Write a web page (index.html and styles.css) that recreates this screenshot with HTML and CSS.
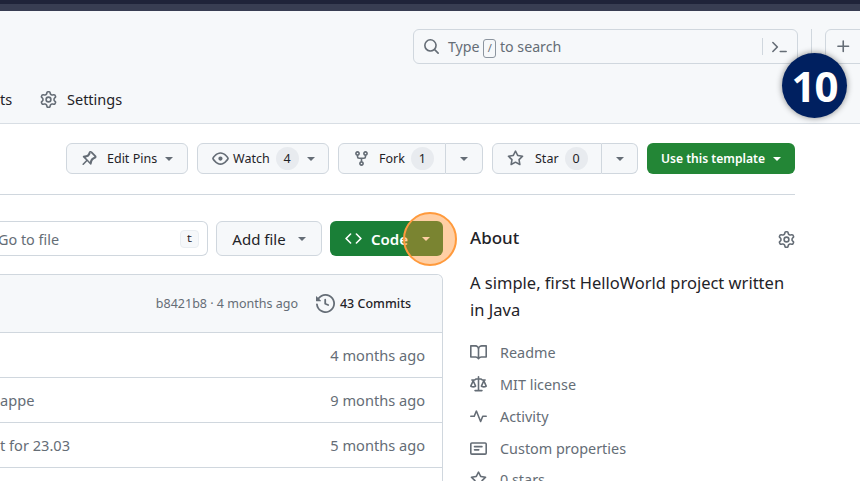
FILE: index.html
```html
<!DOCTYPE html>
<html lang="en">
<head>
  <meta charset="UTF-8" />
  <title>Repository</title>
  <link rel="stylesheet" href="styles.css">
</head>
<body>

<div class="strip-dark"></div>
<div class="strip-light"></div>

<header class="header">
  <div class="header-top">
    <div class="search">
      <svg class="icon" viewBox="0 0 16 16"><path d="M10.68 11.74a6 6 0 0 1-7.922-8.982 6 6 0 0 1 8.982 7.922l3.04 3.04a.749.749 0 1 1-1.06 1.06ZM11.5 7a4.499 4.499 0 1 0-8.997 0A4.499 4.499 0 0 0 11.5 7Z"/></svg>
      <span class="search-text">Type <kbd class="slash">/</kbd> to search</span>
      <span class="search-cmd">
        <svg class="icon" viewBox="0 0 16 16"><path d="M1.22 3.22a.75.75 0 0 1 1.06 0l4.25 4.25a.75.75 0 0 1 0 1.06l-4.25 4.25a.75.75 0 0 1-1.06-1.06L4.94 8 1.22 4.28a.75.75 0 0 1 0-1.06ZM8 12.25a.75.75 0 0 1 .75-.75h5.5a.75.75 0 0 1 0 1.5h-5.5a.75.75 0 0 1-.75-.75Z" transform="translate(0 .5)"/></svg>
      </span>
    </div>
    <span class="top-divider"></span>
    <div class="plus-btn">
      <svg class="icon" viewBox="0 0 16 16"><path d="M7.75 2a.75.75 0 0 1 .75.75V7h4.25a.75.75 0 0 1 0 1.5H8.5v4.25a.75.75 0 0 1-1.5 0V8.5H2.75a.75.75 0 0 1 0-1.5H7V2.75A.75.75 0 0 1 7.75 2Z"/></svg>
    </div>
  </div>
  <nav class="header-nav">
    <span class="nav-cut">ts</span>
    <span class="nav-item">
      <svg class="icon" viewBox="0 0 16 16"><path d="M8 0a8.2 8.2 0 0 1 .701.031C9.444.095 9.99.645 10.16 1.29l.288 1.107c.018.066.079.158.212.224.231.114.454.243.668.386.123.082.233.09.299.071l1.103-.303c.644-.176 1.392.021 1.82.63.27.385.506.792.704 1.218.315.675.111 1.422-.364 1.891l-.814.806c-.049.048-.098.147-.088.294.016.257.016.515 0 .772-.01.147.038.246.088.294l.814.806c.475.469.679 1.216.364 1.891a7.977 7.977 0 0 1-.704 1.217c-.428.61-1.176.807-1.82.63l-1.102-.302c-.067-.019-.177-.011-.3.071a5.909 5.909 0 0 1-.668.386c-.133.066-.194.158-.211.224l-.29 1.106c-.168.646-.715 1.196-1.458 1.26a8.006 8.006 0 0 1-1.402 0c-.743-.064-1.289-.614-1.458-1.26l-.289-1.106c-.018-.066-.079-.158-.212-.224a5.738 5.738 0 0 1-.668-.386c-.123-.082-.233-.09-.299-.071l-1.103.303c-.644.176-1.392-.021-1.82-.63a8.12 8.12 0 0 1-.704-1.218c-.315-.675-.111-1.422.363-1.891l.815-.806c.05-.048.098-.147.088-.294a6.214 6.214 0 0 1 0-.772c.01-.147-.038-.246-.088-.294l-.815-.806C.635 6.045.431 5.298.746 4.623a7.92 7.92 0 0 1 .704-1.217c.428-.61 1.176-.807 1.82-.63l1.102.302c.067.019.177.011.3-.071.214-.143.437-.272.668-.386.133-.066.194-.158.211-.224l.29-1.106C6.009.645 6.556.095 7.299.03 7.53.01 7.764 0 8 0Zm-.571 1.525c-.036.003-.108.036-.137.146l-.289 1.105c-.147.561-.549.967-.998 1.189-.173.086-.34.183-.5.29-.417.278-.97.423-1.529.27l-1.103-.303c-.109-.03-.175.016-.195.045-.22.312-.412.644-.573.99-.014.031-.021.11.059.19l.815.806c.411.406.562.957.53 1.456a4.709 4.709 0 0 0 0 .582c.032.499-.119 1.05-.53 1.456l-.815.806c-.081.08-.073.159-.059.19.162.346.353.677.573.989.02.03.085.076.195.046l1.102-.303c.56-.153 1.113-.008 1.53.27.161.107.328.204.501.29.447.222.85.629.997 1.189l.289 1.105c.029.109.101.143.137.146a6.6 6.6 0 0 0 1.142 0c.036-.003.108-.036.137-.146l.289-1.105c.147-.561.549-.967.998-1.189.173-.086.34-.183.5-.29.417-.278.97-.423 1.529-.27l1.103.303c.109.029.175-.016.195-.045.22-.313.411-.644.573-.99.014-.031.021-.11-.059-.19l-.815-.806c-.411-.406-.562-.957-.53-1.456a4.709 4.709 0 0 0 0-.582c-.032-.499.119-1.05.53-1.456l.815-.806c.081-.08.073-.159.059-.19a6.464 6.464 0 0 0-.573-.989c-.02-.03-.085-.076-.195-.046l-1.102.303c-.56.153-1.113.008-1.53-.27a4.44 4.44 0 0 0-.501-.29c-.447-.222-.85-.629-.997-1.189l-.289-1.105c-.029-.11-.101-.143-.137-.146a6.6 6.6 0 0 0-1.142 0ZM11 8a3 3 0 1 1-6 0 3 3 0 0 1 6 0ZM9.5 8a1.5 1.5 0 1 0-3.001.001A1.5 1.5 0 0 0 9.5 8Z"/></svg>
      Settings
    </span>
  </nav>
</header>

<main class="main">
  <div class="actions">
    <div class="btn btn-pins">
      <svg class="icon" viewBox="0 0 16 16"><path d="m11.294.984 3.722 3.722a1.75 1.75 0 0 1-.504 2.826l-1.327.613a3.089 3.089 0 0 0-1.707 2.084l-.584 2.454a.75.75 0 0 1-1.257.362l-2.867-2.867-3.22 3.22a.749.749 0 1 1-1.06-1.06l3.22-3.22-2.867-2.867a.75.75 0 0 1 .362-1.257l2.454-.584a3.089 3.089 0 0 0 2.084-1.707l.613-1.327a1.75 1.75 0 0 1 2.826-.504ZM10.048 2.56l-.613 1.327a4.589 4.589 0 0 1-3.095 2.537l-1.03.245 4.022 4.022.245-1.03a4.589 4.589 0 0 1 2.537-3.095l1.327-.613a.25.25 0 0 0 .072-.404l-3.722-3.722a.25.25 0 0 0-.404.072Z" transform="translate(0 .5)"/></svg>
      <span class="btn-label">Edit Pins</span>
      <i class="caret"></i>
    </div>
    <div class="btn btn-watch">
      <svg class="icon" viewBox="0 0 16 16"><path d="M8 2c1.981 0 3.671.992 4.933 2.078 1.27 1.091 2.187 2.345 2.637 3.023a1.62 1.62 0 0 1 0 1.798c-.45.678-1.367 1.932-2.637 3.023C11.67 13.008 9.981 14 8 14c-1.981 0-3.671-.992-4.933-2.078C1.797 10.83.88 9.576.43 8.898a1.62 1.62 0 0 1 0-1.798c.45-.677 1.367-1.931 2.637-3.022C4.33 2.992 6.019 2 8 2ZM1.679 7.932a.12.12 0 0 0 0 .136c.411.622 1.241 1.75 2.366 2.717C5.176 11.758 6.527 12.5 8 12.5c1.473 0 2.825-.742 3.955-1.715 1.124-.967 1.954-2.096 2.366-2.717a.12.12 0 0 0 0-.136c-.412-.621-1.242-1.75-2.366-2.717C10.824 4.242 9.473 3.5 8 3.5c-1.473 0-2.825.742-3.955 1.715-1.124.967-1.954 2.096-2.366 2.717ZM8 10a2 2 0 1 1-.001-3.999A2 2 0 0 1 8 10Z"/></svg>
      <span class="btn-label">Watch</span>
      <span class="count">4</span>
      <i class="caret"></i>
    </div>
    <div class="split">
      <div class="btn btn-fork">
        <svg class="icon" viewBox="0 0 16 16"><path d="M5 5.372v.878c0 .414.336.75.75.75h4.5a.75.75 0 0 0 .75-.75v-.878a2.25 2.25 0 1 1 1.5 0v.878a2.25 2.25 0 0 1-2.25 2.25h-1.5v2.128a2.251 2.251 0 1 1-1.5 0V8.5h-1.5A2.25 2.25 0 0 1 3.5 6.25v-.878a2.25 2.25 0 1 1 1.5 0ZM5 3.25a.75.75 0 1 0-1.5 0 .75.75 0 0 0 1.5 0Zm6.75.75a.75.75 0 1 0 0-1.5.75.75 0 0 0 0 1.5Zm-3 8.75a.75.75 0 1 0-1.5 0 .75.75 0 0 0 1.5 0Z"/></svg>
        <span class="btn-label">Fork</span>
        <span class="count">1</span>
      </div>
      <div class="btn btn-side"><i class="caret"></i></div>
    </div>
    <div class="split">
      <div class="btn btn-star">
        <svg class="icon" viewBox="0 0 16 16"><path d="M8 .25a.75.75 0 0 1 .673.418l1.882 3.815 4.21.612a.75.75 0 0 1 .416 1.279l-3.046 2.97.719 4.192a.751.751 0 0 1-1.088.791L8 12.347l-3.766 1.98a.75.75 0 0 1-1.088-.79l.72-4.194L.818 6.374a.75.75 0 0 1 .416-1.28l4.21-.611L7.327.668A.75.75 0 0 1 8 .25Zm0 2.445L6.615 5.5a.75.75 0 0 1-.564.41l-3.097.45 2.24 2.184a.75.75 0 0 1 .216.664l-.528 3.084 2.769-1.456a.75.75 0 0 1 .698 0l2.77 1.456-.53-3.084a.75.75 0 0 1 .216-.664l2.24-2.183-3.096-.45a.75.75 0 0 1-.564-.41L8 2.694Z"/></svg>
        <span class="btn-label">Star</span>
        <span class="count">0</span>
      </div>
      <div class="btn btn-side btn-side-star"><i class="caret"></i></div>
    </div>
    <div class="btn-template">Use this template <i class="caret caret-white"></i></div>
  </div>

  <hr class="rule">

  <div class="columns">
    <section class="files">
      <div class="file-actions">
        <div class="goto">
          <span class="goto-text">Go to file</span>
          <kbd class="key">t</kbd>
        </div>
        <div class="btn-add">Add file <i class="caret"></i></div>
        <div class="btn-code">
          <span class="code-main">
            <svg class="icon-white" viewBox="0 0 16 16"><path d="m11.28 3.22 4.25 4.25a.75.75 0 0 1 0 1.06l-4.25 4.25a.749.749 0 1 1-1.06-1.06L13.94 8l-3.72-3.72a.749.749 0 1 1 1.06-1.06Zm-6.56 0a.751.751 0 0 1 1.06 1.06L2.06 8l3.72 3.72a.749.749 0 1 1-1.06 1.06L.47 8.53a.75.75 0 0 1 0-1.06Z"/></svg>
            Code
          </span>
          <span class="code-caret"><i class="caret caret-white"></i></span>
          <span class="spot"></span>
        </div>
      </div>

      <div class="file-box">
        <div class="file-head">
          <span class="sha">b8421b8 · 4 months ago</span>
          <span class="commits">
            <svg class="icon" viewBox="0 0 16 16"><path d="m.427 1.927 1.215 1.215a8.002 8.002 0 1 1-1.6 5.685.75.75 0 1 1 1.493-.154 6.5 6.5 0 1 0 1.18-4.458l1.358 1.358A.25.25 0 0 1 3.896 6H.25A.25.25 0 0 1 0 5.75V2.104a.25.25 0 0 1 .427-.177ZM7.75 4a.75.75 0 0 1 .75.75v2.992l2.028.812a.75.75 0 0 1-.557 1.392l-2.5-1A.751.751 0 0 1 7 8.25v-3.5A.75.75 0 0 1 7.75 4Z"/></svg>
            43 Commits
          </span>
        </div>
        <div class="file-row"><span></span><span>4 months ago</span></div>
        <div class="file-row"><span>appe</span><span>9 months ago</span></div>
        <div class="file-row"><span>t for 23.03</span><span>5 months ago</span></div>
        <div class="file-row"></div>
      </div>
    </section>

    <aside class="about">
      <div class="about-head">
        <h2>About</h2>
        <svg class="icon" viewBox="0 0 16 16"><path d="M8 0a8.2 8.2 0 0 1 .701.031C9.444.095 9.99.645 10.16 1.29l.288 1.107c.018.066.079.158.212.224.231.114.454.243.668.386.123.082.233.09.299.071l1.103-.303c.644-.176 1.392.021 1.82.63.27.385.506.792.704 1.218.315.675.111 1.422-.364 1.891l-.814.806c-.049.048-.098.147-.088.294.016.257.016.515 0 .772-.01.147.038.246.088.294l.814.806c.475.469.679 1.216.364 1.891a7.977 7.977 0 0 1-.704 1.217c-.428.61-1.176.807-1.82.63l-1.102-.302c-.067-.019-.177-.011-.3.071a5.909 5.909 0 0 1-.668.386c-.133.066-.194.158-.211.224l-.29 1.106c-.168.646-.715 1.196-1.458 1.26a8.006 8.006 0 0 1-1.402 0c-.743-.064-1.289-.614-1.458-1.26l-.289-1.106c-.018-.066-.079-.158-.212-.224a5.738 5.738 0 0 1-.668-.386c-.123-.082-.233-.09-.299-.071l-1.103.303c-.644.176-1.392-.021-1.82-.63a8.12 8.12 0 0 1-.704-1.218c-.315-.675-.111-1.422.363-1.891l.815-.806c.05-.048.098-.147.088-.294a6.214 6.214 0 0 1 0-.772c.01-.147-.038-.246-.088-.294l-.815-.806C.635 6.045.431 5.298.746 4.623a7.92 7.92 0 0 1 .704-1.217c.428-.61 1.176-.807 1.82-.63l1.102.302c.067.019.177.011.3-.071.214-.143.437-.272.668-.386.133-.066.194-.158.211-.224l.29-1.106C6.009.645 6.556.095 7.299.03 7.53.01 7.764 0 8 0Zm-.571 1.525c-.036.003-.108.036-.137.146l-.289 1.105c-.147.561-.549.967-.998 1.189-.173.086-.34.183-.5.29-.417.278-.97.423-1.529.27l-1.103-.303c-.109-.03-.175.016-.195.045-.22.312-.412.644-.573.99-.014.031-.021.11.059.19l.815.806c.411.406.562.957.53 1.456a4.709 4.709 0 0 0 0 .582c.032.499-.119 1.05-.53 1.456l-.815.806c-.081.08-.073.159-.059.19.162.346.353.677.573.989.02.03.085.076.195.046l1.102-.303c.56-.153 1.113-.008 1.53.27.161.107.328.204.501.29.447.222.85.629.997 1.189l.289 1.105c.029.109.101.143.137.146a6.6 6.6 0 0 0 1.142 0c.036-.003.108-.036.137-.146l.289-1.105c.147-.561.549-.967.998-1.189.173-.086.34-.183.5-.29.417-.278.97-.423 1.529-.27l1.103.303c.109.029.175-.016.195-.045.22-.313.411-.644.573-.99.014-.031.021-.11-.059-.19l-.815-.806c-.411-.406-.562-.957-.53-1.456a4.709 4.709 0 0 0 0-.582c-.032-.499.119-1.05.53-1.456l.815-.806c.081-.08.073-.159.059-.19a6.464 6.464 0 0 0-.573-.989c-.02-.03-.085-.076-.195-.046l-1.102.303c-.56.153-1.113.008-1.53-.27a4.44 4.44 0 0 0-.501-.29c-.447-.222-.85-.629-.997-1.189l-.289-1.105c-.029-.11-.101-.143-.137-.146a6.6 6.6 0 0 0-1.142 0ZM11 8a3 3 0 1 1-6 0 3 3 0 0 1 6 0ZM9.5 8a1.5 1.5 0 1 0-3.001.001A1.5 1.5 0 0 0 9.5 8Z"/></svg>
      </div>
      <p class="about-text">A simple, first HelloWorld project written in Java</p>
      <ul class="about-list">
        <li><svg class="icon" viewBox="0 0 16 16"><path d="M0 1.75A.75.75 0 0 1 .75 1h4.253c1.227 0 2.317.59 3 1.501A3.743 3.743 0 0 1 11.006 1h4.245a.75.75 0 0 1 .75.75v10.5a.75.75 0 0 1-.75.75h-4.507a2.25 2.25 0 0 0-1.591.659l-.622.621a.75.75 0 0 1-1.06 0l-.622-.621A2.25 2.25 0 0 0 5.258 13H.75a.75.75 0 0 1-.75-.75Zm7.251 10.324.004-5.073-.002-2.253A2.25 2.25 0 0 0 5.003 2.5H1.5v9h3.757a3.75 3.75 0 0 1 1.994.574ZM8.755 4.75l-.004 7.322a3.752 3.752 0 0 1 1.992-.572H14.5v-9h-3.495a2.25 2.25 0 0 0-2.25 2.25Z"/></svg>Readme</li>
        <li><svg class="icon" viewBox="0 0 16 16"><path d="M8.75.75V2h.985c.304 0 .603.08.867.231l1.29.736c.038.022.08.033.124.033h2.234a.75.75 0 0 1 0 1.5h-.427l2.111 4.692a.75.75 0 0 1-.154.838l-.53-.53.529.531-.001.002-.002.002-.006.006-.006.005-.01.01-.045.04c-.21.176-.441.327-.686.45C14.556 10.78 13.88 11 13 11a4.498 4.498 0 0 1-2.023-.454 3.544 3.544 0 0 1-.686-.45l-.045-.04-.016-.015-.006-.006-.004-.004v-.001a.75.75 0 0 1-.154-.838L12.178 4.5h-.162c-.305 0-.604-.079-.868-.231l-1.29-.736a.245.245 0 0 0-.124-.033H8.75V13h2.5a.75.75 0 0 1 0 1.5h-6.5a.75.75 0 0 1 0-1.5h2.5V3.5h-.984a.245.245 0 0 0-.124.033l-1.289.737c-.265.15-.564.23-.869.23h-.162l2.112 4.692a.75.75 0 0 1-.154.838l-.53-.53.529.531-.001.002-.002.002-.006.006-.016.015-.045.04c-.21.176-.441.327-.686.45C4.556 10.78 3.88 11 3 11a4.498 4.498 0 0 1-2.023-.454 3.544 3.544 0 0 1-.686-.45l-.045-.04-.016-.015-.006-.006-.004-.004v-.001a.75.75 0 0 1-.154-.838L2.178 4.5H1.75a.75.75 0 0 1 0-1.5h2.234a.249.249 0 0 0 .125-.033l1.288-.737c.265-.15.564-.23.869-.23h.984V.75a.75.75 0 0 1 1.5 0Zm2.945 8.477c.285.135.718.273 1.305.273s1.02-.138 1.305-.273L13 6.327Zm-10 0c.285.135.718.273 1.305.273s1.02-.138 1.305-.273L3 6.327Z"/></svg>MIT license</li>
        <li><svg class="icon" viewBox="0 0 16 16"><path d="M6 2c.306 0 .582.187.696.471L10 10.731l1.304-3.26A.751.751 0 0 1 12 7h3.25a.75.75 0 0 1 0 1.5h-2.742l-1.812 4.528a.751.751 0 0 1-1.392 0L6 4.77 4.696 8.03A.75.75 0 0 1 4 8.5H.75a.75.75 0 0 1 0-1.5h2.742l1.812-4.529A.751.751 0 0 1 6 2Z"/></svg>Activity</li>
        <li><svg class="icon" viewBox="0 0 16 16"><path d="M0 3.75C0 2.784.784 2 1.75 2h12.5c.966 0 1.75.784 1.75 1.75v8.5A1.75 1.75 0 0 1 14.25 14H1.75A1.75 1.75 0 0 1 0 12.25Zm1.75-.25a.25.25 0 0 0-.25.25v8.5c0 .138.112.25.25.25h12.5a.25.25 0 0 0 .25-.25v-8.5a.25.25 0 0 0-.25-.25ZM3.5 6.25a.75.75 0 0 1 .75-.75h7a.75.75 0 0 1 0 1.5h-7a.75.75 0 0 1-.75-.75Zm.75 2.25h4a.75.75 0 0 1 0 1.5h-4a.75.75 0 0 1 0-1.5Z"/></svg>Custom properties</li>
        <li><svg class="icon" viewBox="0 0 16 16"><path d="M8 .25a.75.75 0 0 1 .673.418l1.882 3.815 4.21.612a.75.75 0 0 1 .416 1.279l-3.046 2.97.719 4.192a.751.751 0 0 1-1.088.791L8 12.347l-3.766 1.98a.75.75 0 0 1-1.088-.79l.72-4.194L.818 6.374a.75.75 0 0 1 .416-1.28l4.21-.611L7.327.668A.75.75 0 0 1 8 .25Zm0 2.445L6.615 5.5a.75.75 0 0 1-.564.41l-3.097.45 2.24 2.184a.75.75 0 0 1 .216.664l-.528 3.084 2.769-1.456a.75.75 0 0 1 .698 0l2.77 1.456-.53-3.084a.75.75 0 0 1 .216-.664l2.24-2.183-3.096-.45a.75.75 0 0 1-.564-.41L8 2.694Z"/></svg>0 stars</li>
      </ul>
    </aside>
  </div>
</main>

<div class="step-badge">10</div>

</body>
</html>
```

FILE: styles.css
```css
html, body {
  height: 481px;
  overflow: hidden;
}

body {
  margin: 0;
  position: relative;
  font-family: 'Noto Sans', sans-serif;
  font-size: 14px;
  color: #1f2328;
  background: #fff;
}

.strip-dark {
  height: 4px;
  background: #1f2339;
}

.strip-light {
  height: 7px;
  background: #383d52;
}

.icon, .icon-white {
  width: 17px;
  height: 17px;
  flex-shrink: 0;
}

.icon {
  fill: #656d76;
}

.icon-white {
  fill: #fff;
}

/* header */
.header {
  height: 113px;
  background: #f6f8fa;
  border-bottom: 1px solid #d8dee4;
  box-sizing: border-box;
}

.header-top {
  display: flex;
  justify-content: flex-end;
  align-items: flex-start;
  padding-top: 18px;
  margin-right: -29px;
}

.search {
  width: 385px;
  height: 35px;
  box-sizing: border-box;
  display: flex;
  align-items: center;
  padding-left: 9px;
  border: 1px solid #d0d7de;
  border-radius: 6px;
  color: #656d76;
}

.search-text {
  flex: 1;
  margin-left: 8px;
  padding-top: 1px;
  font-size: 14.2px;
}

.slash {
  display: inline-block;
  width: 11px;
  height: 17px;
  line-height: 16px;
  text-align: center;
  border: 1px solid #8c959f;
  border-radius: 3px;
  font-family: 'Noto Sans', sans-serif;
  font-size: 11px;
}

.search-cmd {
  display: flex;
  align-items: center;
  height: 17px;
  padding: 0 9px 0 8px;
  border-left: 1px solid #d0d7de;
}

.top-divider {
  width: 1px;
  height: 34px;
  margin: 0 13px;
  background: #d0d7de;
}

.plus-btn {
  width: 64px;
  height: 35px;
  box-sizing: border-box;
  display: flex;
  align-items: center;
  padding-left: 9px;
  border: 1px solid #d0d7de;
  border-radius: 6px;
}

.header-nav {
  display: flex;
  align-items: center;
  height: 30px;
  margin-top: 20px;
  font-size: 14.5px;
}

.nav-cut {
  width: 40px;
}

.nav-item {
  display: flex;
  align-items: center;
  gap: 10px;
}

/* repo actions */
.main {
  width: 795px;
}

.actions {
  display: flex;
  justify-content: flex-end;
  gap: 9px;
  padding-top: 19px;
}

.btn {
  height: 31px;
  box-sizing: border-box;
  display: flex;
  align-items: center;
  border: 1px solid #d0d7de;
  border-radius: 6px;
  background: #f6f8fa;
  font-size: 12.5px;
}

.btn-pins {
  width: 122px;
  padding-left: 13px;
}

.btn-pins .btn-label {
  margin-left: 10px;
}

.btn-watch {
  width: 132px;
  padding-left: 14px;
}

.btn-watch .btn-label {
  margin-left: 4px;
}

.btn-fork {
  width: 108px;
  padding-left: 14px;
  border-radius: 6px 0 0 6px;
}

.btn-fork .btn-label {
  margin-left: 9px;
}

.btn-star {
  width: 110px;
  padding-left: 14px;
  border-radius: 6px 0 0 6px;
}

.btn-star .btn-label {
  margin-left: 11px;
}

.btn-side {
  width: 37px;
  justify-content: center;
  border-left: none;
  border-radius: 0 6px 6px 0;
}

.btn-side-star {
  width: 36px;
}

.split {
  display: flex;
}

.count {
  width: 23px;
  height: 23px;
  margin-left: 6px;
  border-radius: 50%;
  background: #e8ebef;
  text-align: center;
  line-height: 23px;
}

.caret {
  display: inline-block;
  width: 0;
  height: 0;
  border-style: solid;
  border-width: 4px 4px 0;
  border-color: #656d76 transparent transparent;
}

.btn-pins .caret, .btn-watch .caret {
  margin-left: 8px;
}

.caret-white {
  border-top-color: #fff;
}

.btn-template {
  width: 148px;
  height: 31px;
  box-sizing: border-box;
  display: flex;
  align-items: center;
  justify-content: center;
  gap: 8px;
  border-radius: 6px;
  background: #238636;
  color: #fff;
  font-size: 12.1px;
  font-weight: 600;
}

.rule {
  margin: 20px 0 0;
  border: none;
  border-top: 1px solid #d0d7de;
}

/* file list */
.columns {
  display: flex;
  justify-content: flex-end;
  gap: 27px;
}

.files {
  width: 443px;
  flex-shrink: 0;
}

.file-actions {
  display: flex;
  gap: 8px;
  margin-top: 26px;
  height: 35px;
}

.goto {
  width: 208px;
  box-sizing: border-box;
  display: flex;
  align-items: center;
  justify-content: space-between;
  padding-right: 8px;
  border: 1px solid #d0d7de;
  border-left: none;
  border-radius: 0 6px 6px 0;
  color: #656d76;
}

.goto-text {
  margin-left: -2px;
  padding-top: 1px;
  font-size: 14.4px;
}

.key {
  width: 19px;
  height: 18px;
  box-sizing: border-box;
  text-align: center;
  line-height: 16px;
  border: 1px solid #eaeef2;
  border-radius: 4px;
  background: #f6f8fa;
  font-family: 'Liberation Mono', monospace;
  font-size: 11px;
  color: #1f2328;
}

.btn-add {
  width: 106px;
  box-sizing: border-box;
  display: flex;
  align-items: center;
  justify-content: center;
  gap: 12px;
  border: 1px solid #d0d7de;
  border-radius: 6px;
  background: #f6f8fa;
  font-size: 15px;
}

.btn-code {
  width: 113px;
  position: relative;
  display: flex;
  border-radius: 6px;
  background: #1a7f37;
  color: #fff;
  font-size: 15px;
  font-weight: 600;
}

.code-main {
  flex: 1;
  display: flex;
  align-items: center;
  gap: 9px;
  padding-left: 15px;
}

.code-caret {
  width: 38px;
  display: flex;
  align-items: center;
  justify-content: center;
}

/* click highlight sits over the caret */
.spot {
  position: absolute;
  left: 73px;
  top: -9px;
  width: 54px;
  height: 54px;
  box-sizing: border-box;
  border: 2px solid #ff9a3c;
  border-radius: 50%;
  background: rgba(255, 140, 40, 0.42);
}

.file-box {
  margin-top: 18px;
  border: 1px solid #d0d7de;
  border-left: none;
  border-radius: 0 6px 6px 0;
  font-size: 14.6px;
  color: #656d76;
}

.file-head {
  height: 57px;
  display: flex;
  align-items: center;
  justify-content: flex-end;
  gap: 18px;
  padding-right: 31px;
  background: #f6f8fa;
  border-radius: 0 6px 0 0;
  font-size: 12.5px;
}

.commits {
  display: flex;
  align-items: center;
  gap: 5px;
  color: #1f2328;
  font-weight: 500;
}

.commits .icon {
  width: 19px;
  height: 19px;
}

.file-row {
  height: 44px;
  display: flex;
  align-items: center;
  justify-content: space-between;
  padding-right: 17px;
  border-top: 1px solid #d0d7de;
}

/* about */
.about {
  width: 325px;
  flex-shrink: 0;
  padding-top: 32px;
}

.about-head {
  display: flex;
  align-items: center;
  justify-content: space-between;
  height: 24px;
}

.about-head h2 {
  margin: 0 0 4px;
  font-size: 17px;
  font-weight: 500;
}

.about-text {
  margin: 18px 0 0;
  font-size: 16.5px;
  line-height: 27px;
}

.about-list {
  margin: 14px 0 0;
  padding: 0;
  list-style: none;
  font-size: 14.4px;
  color: #656d76;
}

.about-list li {
  display: flex;
  align-items: center;
  gap: 13px;
  height: 31.75px;
}

/* step number */
.step-badge {
  position: absolute;
  left: 782px;
  top: 53px;
  width: 65px;
  height: 65px;
  border-radius: 50%;
  background: #002060;
  color: #fff;
  box-shadow: 0 0 6px rgba(0, 0, 0, 0.45);
  font-size: 42px;
  font-weight: 700;
  line-height: 65px;
  text-align: center;
  letter-spacing: -1px;
}
```
